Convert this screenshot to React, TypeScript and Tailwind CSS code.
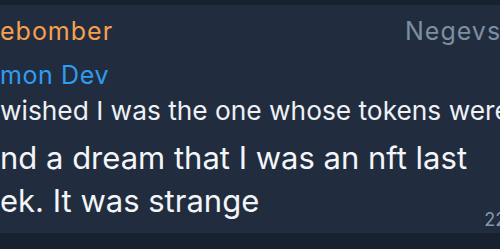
export default function App() {
  return (
    <div
      className="w-[500px] h-[249px] overflow-hidden bg-[#18212e] pt-[5px]"
      style={{ fontFamily: "Inter, 'Noto Sans', sans-serif" }}
    >
      <div className="h-[228px] bg-[#212d3f] pt-[11px] overflow-hidden">
        {/* sender row */}
        <div className="grid grid-cols-[1fr_95px] h-[30px] leading-[30px] text-[25px] tracking-[1px] whitespace-nowrap">
          <span className="text-[#f6a04f]">ebomber</span>
          <span className="text-[#7d8da2] overflow-hidden">Negevsky</span>
        </div>

        {/* reply preview */}
        <div className="mt-[14px] h-[30px] leading-[30px] text-[25px] tracking-[0.6px] text-[#2f9cf2] whitespace-nowrap">
          mon Dev
        </div>
        <div className="mt-[5px] h-[32px] leading-[32px] text-[26.3px] text-[#eef1f5] whitespace-nowrap">
          wished I was the one whose tokens were
        </div>

        {/* message */}
        <div className="mt-[9px] text-[31px] leading-[43px] text-[#f3f5f8] whitespace-nowrap">
          <div>nd a dream that I was an nft last</div>
          <div className="flex items-end">
            <span>ek. It was strange</span>
            <span className="ml-auto mr-[-30px] mb-[-9px] text-[18px] leading-[22px] text-[#8797ab]">
              22:41
            </span>
          </div>
        </div>
      </div>
    </div>
  );
}
